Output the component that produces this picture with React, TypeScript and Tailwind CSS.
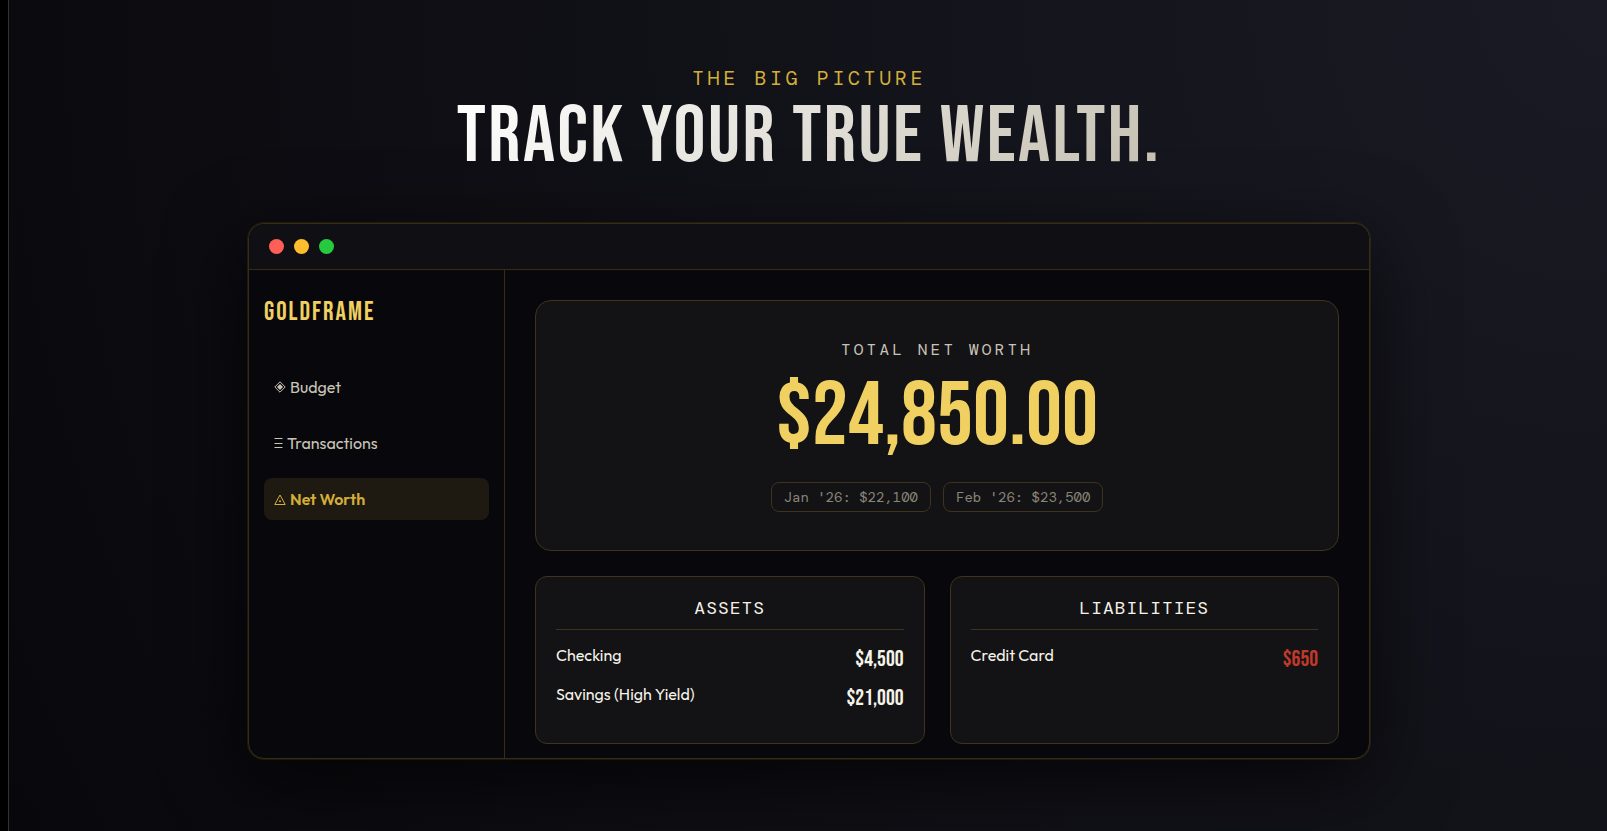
import type { ReactNode } from 'react';

const display = "font-['Bebas_Neue','Liberation_Sans_Narrow',sans-serif]";
const mono = "font-['DM_Mono','Liberation_Mono',monospace]";

type Entry = { name: string; value: string };

const assets: Entry[] = [
  { name: 'Checking', value: '$4,500' },
  { name: 'Savings (High Yield)', value: '$21,000' },
];

const liabilities: Entry[] = [{ name: 'Credit Card', value: '$650' }];

const history = ["Jan '26: $22,100", "Feb '26: $23,500"];

function DiamondIcon() {
  return (
    <svg className="size-3" viewBox="0 0 12 12" fill="none" stroke="currentColor" aria-hidden="true">
      <path d="M6 .8 11.2 6 6 11.2.8 6z" />
      <path d="M6 3 9 6 6 9 3 6z" fill="currentColor" stroke="none" />
    </svg>
  );
}

function LinesIcon() {
  return (
    <svg className="h-3 w-[9px]" viewBox="0 0 9 12" fill="none" stroke="currentColor" aria-hidden="true">
      <path d="M.5 1.5h8M.5 6.5h8M.5 10.5h8" />
    </svg>
  );
}

function TriangleIcon() {
  return (
    <svg className="size-3" viewBox="0 0 12 12" fill="none" stroke="currentColor" aria-hidden="true">
      <path d="M6 2 11.2 11.5H.8z" />
      <circle cx="6" cy="8.2" r="1" fill="currentColor" stroke="none" />
    </svg>
  );
}

function NavItem({ icon, label, active }: { icon: ReactNode; label: string; active?: boolean }) {
  return (
    <a
      href="#"
      aria-current={active ? 'page' : undefined}
      className={
        active
          ? 'flex h-[42px] items-center gap-1 rounded-lg bg-[#1e1a12] px-2.5 font-semibold text-[#d4af37]'
          : 'flex h-[42px] items-center gap-1 rounded-lg px-2.5 text-[#c9c4b8]'
      }
    >
      {icon}
      {label}
    </a>
  );
}

function Ledger({ title, entries, negative }: { title: string; entries: Entry[]; negative?: boolean }) {
  return (
    <section className="min-h-[168px] flex-1 rounded-xl border border-[#3d331e] bg-[#131315] px-5 pt-[18px] pb-5">
      <h3 className={`${mono} border-b border-[#3d331e] pb-2 text-center text-lg leading-[26px] tracking-[1px] text-[#f5f2e8]`}>
        {title}
      </h3>
      <ul className="pt-2.5">
        {entries.map((entry) => (
          <li key={entry.name} className="flex h-[39px] justify-between pt-[3px] text-[#f5f2e8]">
            <span className="leading-6">{entry.name}</span>
            <span className={`${display} text-[22px] leading-[34px] ${negative ? 'text-[#c0392b]' : ''}`}>
              {entry.value}
            </span>
          </li>
        ))}
      </ul>
    </section>
  );
}

export default function App() {
  return (
    <div className="min-h-screen bg-black pl-2 font-['Outfit','Lato',sans-serif] text-base">
      <main className="min-h-screen border-l border-[#333333] bg-[radial-gradient(circle_at_top_right,#1a1a24,#08080c)] pt-[64px] pr-8 pb-[72px] pl-[34px]">
        <header className="text-center">
          <p className={`${mono} text-xl leading-[28px] tracking-[0.18em] text-[#d4af37]`}>THE BIG PICTURE</p>
          <h1 className={`${display} mt-[5px] text-[80px] leading-[80px] tracking-[0.03em]`}>
            <span className="inline-block bg-linear-135 from-white to-[#c4bfb0] bg-clip-text text-transparent">
              TRACK YOUR TRUE WEALTH.
            </span>
          </h1>
        </header>

        <div className="mx-auto mt-[46px] max-w-[1122px] overflow-hidden rounded-2xl border border-[#382d14] bg-[#08080c] shadow-[0_0_0_1px_rgba(212,175,55,0.1),0_20px_80px_rgba(0,0,0,0.7)]">
          <div className="flex gap-2.5 border-b border-[#382d14] bg-[#0f0f14] px-5 py-[15px]">
            <span className="size-[15px] rounded-full bg-[#ff5f56]" />
            <span className="size-[15px] rounded-full bg-[#ffbd2e]" />
            <span className="size-[15px] rounded-full bg-[#27c93f]" />
          </div>

          <div className="flex">
            <aside className="w-64 shrink-0 border-r border-[#382d14] px-[15px] pt-[27px]">
              <div className={`${display} text-[26px] leading-8 tracking-[2px] text-[#f0d060]`}>GOLDFRAME</div>
              <nav className="mt-[37px] flex flex-col gap-3.5">
                <NavItem icon={<DiamondIcon />} label="Budget" />
                <NavItem icon={<LinesIcon />} label="Transactions" />
                <NavItem icon={<TriangleIcon />} label="Net Worth" active />
              </nav>
            </aside>

            <div className="min-w-0 flex-1 px-[30px] pt-[30px] pb-3.5">
              <section className="rounded-2xl border border-[#3d331e] bg-[#131315] px-10 pt-[37px] pb-[38px] text-center">
                <h2 className={`${mono} text-base leading-6 tracking-[0.2em] text-[#c9c4b8]`}>TOTAL NET WORTH</h2>
                <p className={`${display} mt-2.5 text-[90px] leading-[90px] text-[#f0d060]`}>$24,850.00</p>
                <div className="mt-5 flex justify-center gap-3">
                  {history.map((item) => (
                    <span
                      key={item}
                      className={`${mono} rounded-lg border border-[#3d331e] px-3 py-1 text-sm leading-5 text-[#8a8577]`}
                    >
                      {item}
                    </span>
                  ))}
                </div>
              </section>

              <div className="mt-[25px] flex gap-[25px]">
                <Ledger title="ASSETS" entries={assets} />
                <Ledger title="LIABILITIES" entries={liabilities} negative />
              </div>
            </div>
          </div>
        </div>
      </main>
    </div>
  );
}
